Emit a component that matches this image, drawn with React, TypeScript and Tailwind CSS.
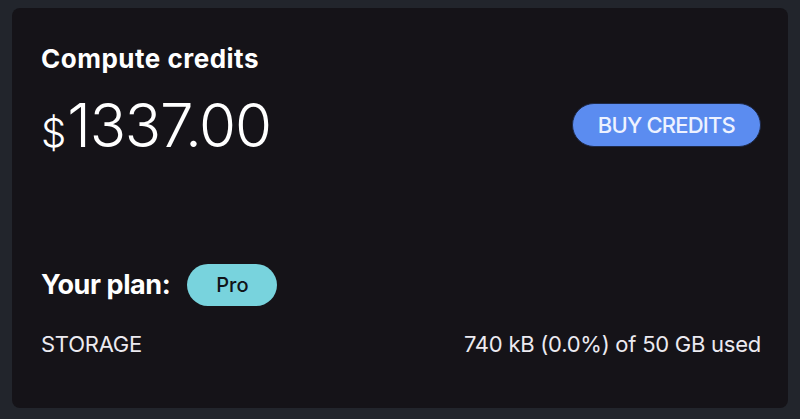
import React from "react";

export default function App() {
  return (
    <div className="w-[800px] h-[419px] bg-[#22252c] pt-[8px] px-[12px] pb-[11px]" style={{ fontFamily: "Inter, 'Noto Sans', sans-serif" }}>
      <div className="h-full rounded-[8px] bg-[#151318] text-white pl-[29px] pr-[27px] pt-[36px] flex flex-col">
        <div className="text-[26px] leading-[30px] font-bold tracking-[0.5px]">Compute credits</div>
        <div className="flex items-center justify-between mt-[18px]">
          <div className="flex items-baseline font-light">
            <span className="text-[40px] leading-none mr-[1px]">$</span>
            <span className="text-[60px] leading-[66px] tracking-[-1.2px]">1337.00</span>
          </div>
          <button className="h-[44px] px-[25px] rounded-full bg-[#5b8cf0] border border-[#1e2a4a] text-[#eef2ff] text-[22px] font-medium tracking-[-0.8px]">
            BUY CREDITS
          </button>
        </div>
        <div className="flex items-center mt-[106px] gap-[17px]">
          <div className="text-[27px] font-bold tracking-[-0.4px]">Your plan:</div>
          <div className="h-[42px] w-[90px] rounded-full bg-[#78d3dd] text-[#101418] text-[20px] font-medium flex items-center justify-center">Pro</div>
        </div>
        <div className="flex items-center justify-between mt-[24px] text-[22px] leading-[28px] text-[#eceaf0] tracking-[-0.25px]">
          <span>STORAGE</span>
          <span>740 kB (0.0%) of 50 GB used</span>
        </div>
      </div>
    </div>
  );
}
